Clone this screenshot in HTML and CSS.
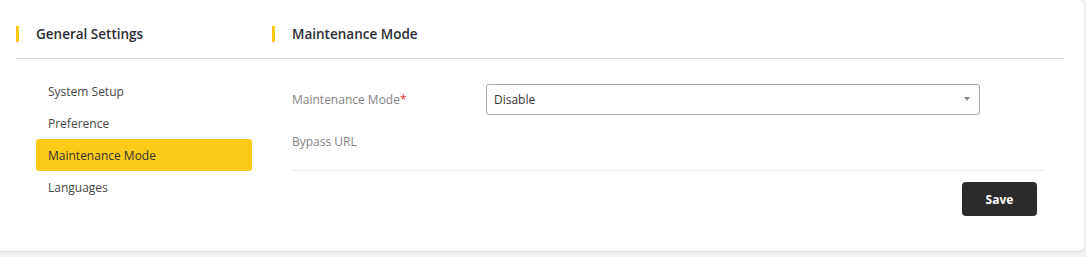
FILE: index.html
```html
<!DOCTYPE html>
<html lang="en">
<head>
<meta charset="utf-8">
<title>Maintenance Mode</title>
<link rel="stylesheet" href="styles.css">
</head>
<body>
<div class="card">
  <div class="header">
    <div class="header-col left"><span class="bar"></span><h2>General Settings</h2></div>
    <div class="header-col"><span class="bar"></span><h2>Maintenance Mode</h2></div>
  </div>
  <div class="body">
    <ul class="sidebar">
      <li>System Setup</li>
      <li>Preference</li>
      <li class="active">Maintenance Mode</li>
      <li>Languages</li>
    </ul>
    <div class="main">
      <div class="row">
        <label class="label">Maintenance Mode<span class="req">*</span></label>
        <div class="select"><span>Disable</span><span class="caret"></span></div>
      </div>
      <div class="row row2">
        <label class="label">Bypass URL</label>
      </div>
      <div class="footer">
        <button class="save">Save</button>
      </div>
    </div>
  </div>
</div>
</body>
</html>
```
FILE: styles.css
```css
* { box-sizing: border-box; }
html, body { margin: 0; padding: 0; }
body {
  background: #f1f1f1;
  font-family: "Open Sans", "Noto Sans", sans-serif;
  width: 1086px;
  height: 257px;
  overflow: hidden;
}
.card {
  width: 1084px;
  height: 251px;
  background: #fff;
  border-radius: 0 6px 6px 0;
  box-shadow: 0 1px 2px rgba(0,0,0,0.12);
  padding: 0 20px 0 16px;
}
.header {
  display: flex;
  padding: 26px 0 16px;
  border-bottom: 1px solid #dedede;
}
.header-col { display: flex; align-items: center; }
.header-col.left { width: 256px; }
.bar {
  width: 3px;
  height: 16px;
  background: #fbc512;
  margin-right: 17px;
}
.header h2 {
  margin: 0;
  font-size: 13.5px;
  font-weight: 600;
  line-height: 16px;
  color: #2b2d35;
}
.body { display: flex; }
.sidebar {
  list-style: none;
  margin: 0;
  padding: 16px 20px 0;
  width: 256px;
}
.sidebar li {
  height: 32px;
  line-height: 33px;
  padding-left: 12px;
  font-size: 12px;
  color: #444;
  border-radius: 3px;
}
.sidebar li.active { background: #fccb19; color: #333; }
.main {
  flex: 1;
  padding: 25px 20px 0 20px;
}
.row { display: flex; align-items: center; height: 31px; }
.row2 { margin-top: 10px; height: 32px; }
.label {
  width: 194px;
  font-size: 12px;
  color: #858585;
}
.req { color: #e53935; }
.select {
  width: 494px;
  height: 31px;
  border: 1px solid #a9a9a9;
  border-radius: 3px;
  display: flex;
  align-items: center;
  justify-content: space-between;
  padding: 0 9px 0 7px;
  font-size: 12px;
  color: #333;
}
.caret {
  width: 0; height: 0;
  border-left: 3px solid transparent;
  border-right: 3px solid transparent;
  border-top: 4px solid #8a8a8a;
  margin-top: -2px;
}
.footer {
  margin-top: 13px;
  border-top: 1px solid #ececec;
  padding: 11px 7px 0 0;
  display: flex;
  justify-content: flex-end;
}
.save {
  width: 75px;
  height: 34px;
  background: #2b2b2b;
  color: #fff;
  border: none;
  border-radius: 4px;
  font-family: "Open Sans", "Noto Sans", sans-serif;
  font-size: 12px;
  font-weight: 700;
}
```
